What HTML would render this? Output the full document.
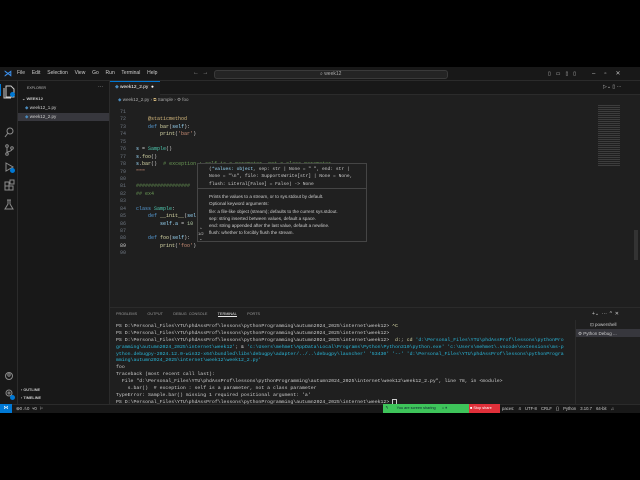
<!DOCTYPE html>
<html><head><meta charset="utf-8"><style>
*{margin:0;padding:0;box-sizing:border-box}
body{width:640px;height:480px;background:#000;position:relative;overflow:hidden;font-family:"Liberation Sans",sans-serif;color:#ccc}
.a{position:absolute}
.m{font-family:"Liberation Mono",monospace}
.code div{height:7.45px;line-height:7.45px;font-size:5px;white-space:pre}
.ln{display:inline-block;color:#6e7681;text-align:right;width:20px;margin-right:10px;font-size:5px}
.k{color:#569cd6}.f{color:#dcdcaa}.s{color:#ce9178}.c{color:#6a9955}.n{color:#4ec9b0}.v{color:#9cdcfe}.d{color:#d7ba7d}
.term div{height:6.9px;line-height:6.9px;font-size:4.85px;color:#ccc;white-space:pre}
.t{color:#29b8db}
</style></head><body>
<div class="a" style="left:0;top:67px;width:640px;height:346px;background:#1f1f1f"></div>
<div class="a" style="left:0;top:67px;width:640px;height:14px;background:#181818;border-bottom:1px solid #2b2b2b"></div>
<div class="a" style="left:4px;top:70px;width:7px;height:7px;color:#3b8eea;font-size:8px;line-height:7px;font-weight:bold">⋊</div>
<div class="a" style="left:17px;top:70px;font-size:5px;color:#ccc;word-spacing:2px">File&nbsp; Edit&nbsp; Selection&nbsp; View&nbsp; Go&nbsp; Run&nbsp; Terminal&nbsp; Help</div>
<div class="a" style="left:193px;top:70px;font-size:6px;color:#999">←&nbsp; →</div>
<div class="a" style="left:214px;top:70px;width:234px;height:9px;background:#242424;border:1px solid #3a3a3a;border-radius:3px"></div>
<div class="a" style="left:320px;top:71px;font-size:5px;color:#aaa">⌕ week12</div>
<div class="a" style="left:548px;top:71px;font-size:5px;color:#bbb;letter-spacing:5px">▯▭▯▯</div>
<div class="a" style="left:592px;top:70px;font-size:6px;color:#bbb;letter-spacing:9px">–▫✕</div>
<div class="a" style="left:0;top:81px;width:18px;height:323px;background:#181818;border-right:1px solid #2b2b2b"></div>
<div class="a" style="left:0;top:84px;width:1px;height:12px;background:#0078d4"></div>
<svg class="a" style="left:0;top:82px" width="18" height="130" fill="none" stroke="#8b8b8b" stroke-width="1">
<path d="M6 4h5l3 3v8H6z M4 6v10h7" stroke="#ccc"/>
<circle cx="10" cy="49" r="3"/><path d="M8 51l-3 4"/>
<circle cx="7" cy="64" r="1.3"/><circle cx="7" cy="72" r="1.3"/><circle cx="12" cy="66" r="1.3"/><path d="M7 65v6M12 67c0 3-5 2-5 4"/>
<path d="M6 81l7 4-7 4z"/>
<path d="M5 100h4v4H5zM9 104h4v4H9zM5 104h4v4H5zM10 98h4v4h-4z"/>
<path d="M7 118h4M8 118v4l-3 5h8l-3-5v-4"/>
</svg>
<div class="a" style="left:10px;top:92px;width:5px;height:5px;border-radius:50%;background:#0078d4"></div>
<div class="a" style="left:10px;top:168px;width:5px;height:5px;border-radius:50%;background:#0078d4"></div>
<svg class="a" style="left:0;top:370px" width="18" height="34" fill="none" stroke="#8b8b8b" stroke-width="1">
<circle cx="9" cy="6" r="3.5"/><circle cx="9" cy="5" r="1.2"/>
<circle cx="9" cy="23" r="3"/><circle cx="9" cy="23" r="1"/>
</svg>
<div class="a" style="left:10px;top:395px;width:5px;height:5px;border-radius:50%;background:#0078d4"></div>
<div class="a" style="left:18px;top:81px;width:92px;height:323px;background:#181818;border-right:1px solid #2b2b2b"></div>
<div class="a" style="left:27px;top:86px;font-size:3.5px;color:#bbb">EXPLORER</div>
<div class="a" style="left:98px;top:84px;font-size:5px;color:#bbb">···</div>
<div class="a" style="left:22px;top:96px;font-size:4px;color:#ccc;font-weight:bold">⌄ WEEK12</div>
<div class="a" style="left:25px;top:105px;font-size:4.5px;color:#ccc"><span style="color:#4b8bbe">◆</span> week12_1.py</div>
<div class="a" style="left:18px;top:113px;width:91px;height:8px;background:#37373d"></div>
<div class="a" style="left:25px;top:114px;font-size:4.5px;color:#ccc"><span style="color:#4b8bbe">◆</span> week12_2.py</div>
<div class="a" style="left:21px;top:388px;font-size:3.8px;color:#ccc;font-weight:bold">› OUTLINE</div>
<div class="a" style="left:21px;top:396px;font-size:3.8px;color:#ccc;font-weight:bold">› TIMELINE</div>
<div class="a" style="left:110px;top:81px;width:530px;height:14px;background:#181818;border-bottom:1px solid #2b2b2b"></div>
<div class="a" style="left:110px;top:81px;width:50px;height:14px;background:#1f1f1f;border-top:1px solid #0078d4"></div>
<div class="a" style="left:115px;top:85px;font-size:4.8px;color:#fff"><span style="color:#4b8bbe">◆</span> week12_2.py &nbsp;●</div>
<div class="a" style="left:603px;top:84px;font-size:5px;color:#bbb">▷⌄ ▯ ···</div>
<div class="a" style="left:118px;top:97px;font-size:4.5px;color:#aaa"><span style="color:#4b8bbe">◆</span> week12_2.py › <span style="color:#d7ba7d">⧉</span> Sample › ⚙ foo</div>
<div class="a code m" style="left:106px;top:109px">
<div><span class="ln">71</span></div>
<div><span class="ln">72</span>    <span class="d">@staticmethod</span></div>
<div><span class="ln">73</span>    <span class="k">def</span> <span class="f">bar</span>(<span class="v">self</span>):</div>
<div><span class="ln">74</span>        <span class="f">print</span>(<span class="s">'bar'</span>)</div>
<div><span class="ln">75</span></div>
<div><span class="ln">76</span><span class="v">s</span> = <span class="n">Sample</span>()</div>
<div><span class="ln">77</span><span class="v">s</span>.<span class="f">foo</span>()</div>
<div><span class="ln">78</span><span class="v">s</span>.<span class="f">bar</span>()  <span class="c"># exception : self is a parameter, not a class parameter</span></div>
<div><span class="ln">79</span><span class="s">"""</span></div>
<div><span class="ln">80</span></div>
<div><span class="ln">81</span><span class="c">##################</span></div>
<div><span class="ln">82</span><span class="c">## ex4</span></div>
<div><span class="ln">83</span></div>
<div><span class="ln">84</span><span class="k">class</span> <span class="n">Sample</span>:</div>
<div><span class="ln">85</span>    <span class="k">def</span> <span class="f">__init__</span>(<span class="v">sel</span></div>
<div><span class="ln">86</span>        <span class="v">self</span>.<span class="v">a</span> = <span style="color:#b5cea8">10</span></div>
<div><span class="ln">87</span></div>
<div><span class="ln">88</span>    <span class="k">def</span> <span class="f">foo</span>(<span class="v">self</span>):</div>
<div><span class="ln" style="color:#ccc">89</span>        <span class="f">print</span>(<span class="s">'foo'</span>)</div>
<div><span class="ln">90</span></div>
</div>
<div class="a" style="left:197px;top:163px;width:170px;height:79px;background:#202020;border:1px solid #454545"></div>
<div class="a m" style="left:209px;top:166px;font-size:4.6px;line-height:7.3px;color:#ccc;white-space:pre">(<span class="v">*values: object</span>, sep: str | None = " ", end: str |
None = "\n", file: SupportsWrite[str] | None = None,
flush: Literal[False] = False) -&gt; None</div>
<div class="a" style="left:198px;top:188px;width:168px;height:1px;background:#454545"></div>
<div class="a" style="left:209px;top:193px;font-size:4.6px;line-height:7.3px;color:#ccc;white-space:pre">Prints the values to a stream, or to sys.stdout by default.
Optional keyword arguments:
file: a file-like object (stream); defaults to the current sys.stdout.
sep: string inserted between values, default a space.
end: string appended after the last value, default a newline.
flush: whether to forcibly flush the stream.</div>
<div class="a" style="left:198px;top:226px;font-size:4px;color:#ccc;text-align:center;line-height:5px">^<br>1/2<br>⌄</div>
<div class="a" style="left:598px;top:104px;width:22px;height:62px;background:repeating-linear-gradient(#1f1f1f 0 1px,#4a4a4a 1px 2px);opacity:.7"></div>
<div class="a" style="left:634px;top:230px;width:4px;height:30px;background:#333"></div>
<div class="a" style="left:110px;top:307px;width:530px;height:1px;background:#2b2b2b"></div>
<div class="a" style="left:116px;top:312px;font-size:3.8px;color:#999;word-spacing:1px">PROBLEMS&nbsp;&nbsp;&nbsp;&nbsp; OUTPUT&nbsp;&nbsp;&nbsp;&nbsp; DEBUG CONSOLE&nbsp;&nbsp;&nbsp;&nbsp; <span style="color:#e7e7e7;border-bottom:1px solid #e7e7e7">TERMINAL</span>&nbsp;&nbsp;&nbsp;&nbsp; PORTS</div>
<div class="a" style="left:592px;top:311px;font-size:5px;color:#ccc">+⌄ &nbsp;··· &nbsp;^ &nbsp;✕</div>
<div class="a" style="left:575px;top:320px;width:1px;height:84px;background:#2b2b2b"></div>
<div class="a" style="left:590px;top:322px;font-size:4.5px;color:#ccc">⊡ powershell</div>
<div class="a" style="left:576px;top:329px;width:64px;height:8px;background:#37373d"></div>
<div class="a" style="left:578px;top:331px;font-size:4.5px;color:#ccc">⚙ Python Debug ...</div>
<div class="a term m" style="left:116px;top:324px">
<div>PS D:\Personal_Files\YTU\phdAssProf\lessons\pythonProgramming\autumn2024_2025\internet\week12&gt; <span class="f">^C</span></div>
<div>PS D:\Personal_Files\YTU\phdAssProf\lessons\pythonProgramming\autumn2024_2025\internet\week12&gt;</div>
<div>PS D:\Personal_Files\YTU\phdAssProf\lessons\pythonProgramming\autumn2024_2025\internet\week12&gt;  <span class="f">d:</span>; <span class="f">cd</span> <span class="t">'d:\Personal_Files\YTU\phdAssProf\lessons\pythonPro</span></div>
<div><span class="t">gramming\autumn2024_2025\internet\week12'</span>; &amp; <span class="t">'c:\Users\mehmet\AppData\Local\Programs\Python\Python310\python.exe' 'c:\Users\mehmet\.vscode\extensions\ms-p</span></div>
<div><span class="t">ython.debugpy-2024.12.0-win32-x64\bundled\libs\debugpy\adapter/../..\debugpy\launcher' '53430' '--' 'd:\Personal_Files\YTU\phdAssProf\lessons\pythonProgra</span></div>
<div><span class="t">mming\autumn2024_2025\internet\week12\week12_2.py'</span></div>
<div>foo</div>
<div>Traceback (most recent call last):</div>
<div>  File "d:\Personal_Files\YTU\phdAssProf\lessons\pythonProgramming\autumn2024_2025\internet\week12\week12_2.py", line 78, in &lt;module&gt;</div>
<div>    s.bar()  # exception : self is a parameter, not a class parameter</div>
<div>TypeError: Sample.bar() missing 1 required positional argument: 'a'</div>
<div>PS D:\Personal_Files\YTU\phdAssProf\lessons\pythonProgramming\autumn2024_2025\internet\week12&gt; <span style="border:1px solid #ccc">&nbsp;</span></div>
</div>
<div class="a" style="left:0;top:404px;width:640px;height:9px;background:#181818;border-top:1px solid #2b2b2b"></div>
<div class="a" style="left:0;top:404px;width:12px;height:9px;background:#0078d4;color:#fff;font-size:5px;text-align:center;line-height:9px">⋈</div>
<div class="a" style="left:16px;top:406px;font-size:4.3px;color:#ccc">⊗0 ⚠0 &nbsp;⑂0 &nbsp;⚐</div>
<div class="a" style="left:383px;top:404px;width:86px;height:9px;background:#3ec45a;font-size:3.8px;color:#123;line-height:9px">&nbsp;&nbsp;↰&nbsp;&nbsp;&nbsp;&nbsp;&nbsp;&nbsp;&nbsp; You are screen sharing &nbsp;&nbsp;&nbsp;&nbsp;&nbsp;⌂ ⏸</div>
<div class="a" style="left:469px;top:404px;width:31px;height:9px;background:#e0303a;font-size:3.8px;color:#fff;line-height:9px">&nbsp;■ Stop share</div>
<div class="a" style="left:502px;top:406px;font-size:4.2px;color:#ccc;word-spacing:3px">paces:&nbsp;4 UTF-8 CRLF {}&nbsp;Python 3.10.7&nbsp;64-bit ♫</div>
</body></html>
